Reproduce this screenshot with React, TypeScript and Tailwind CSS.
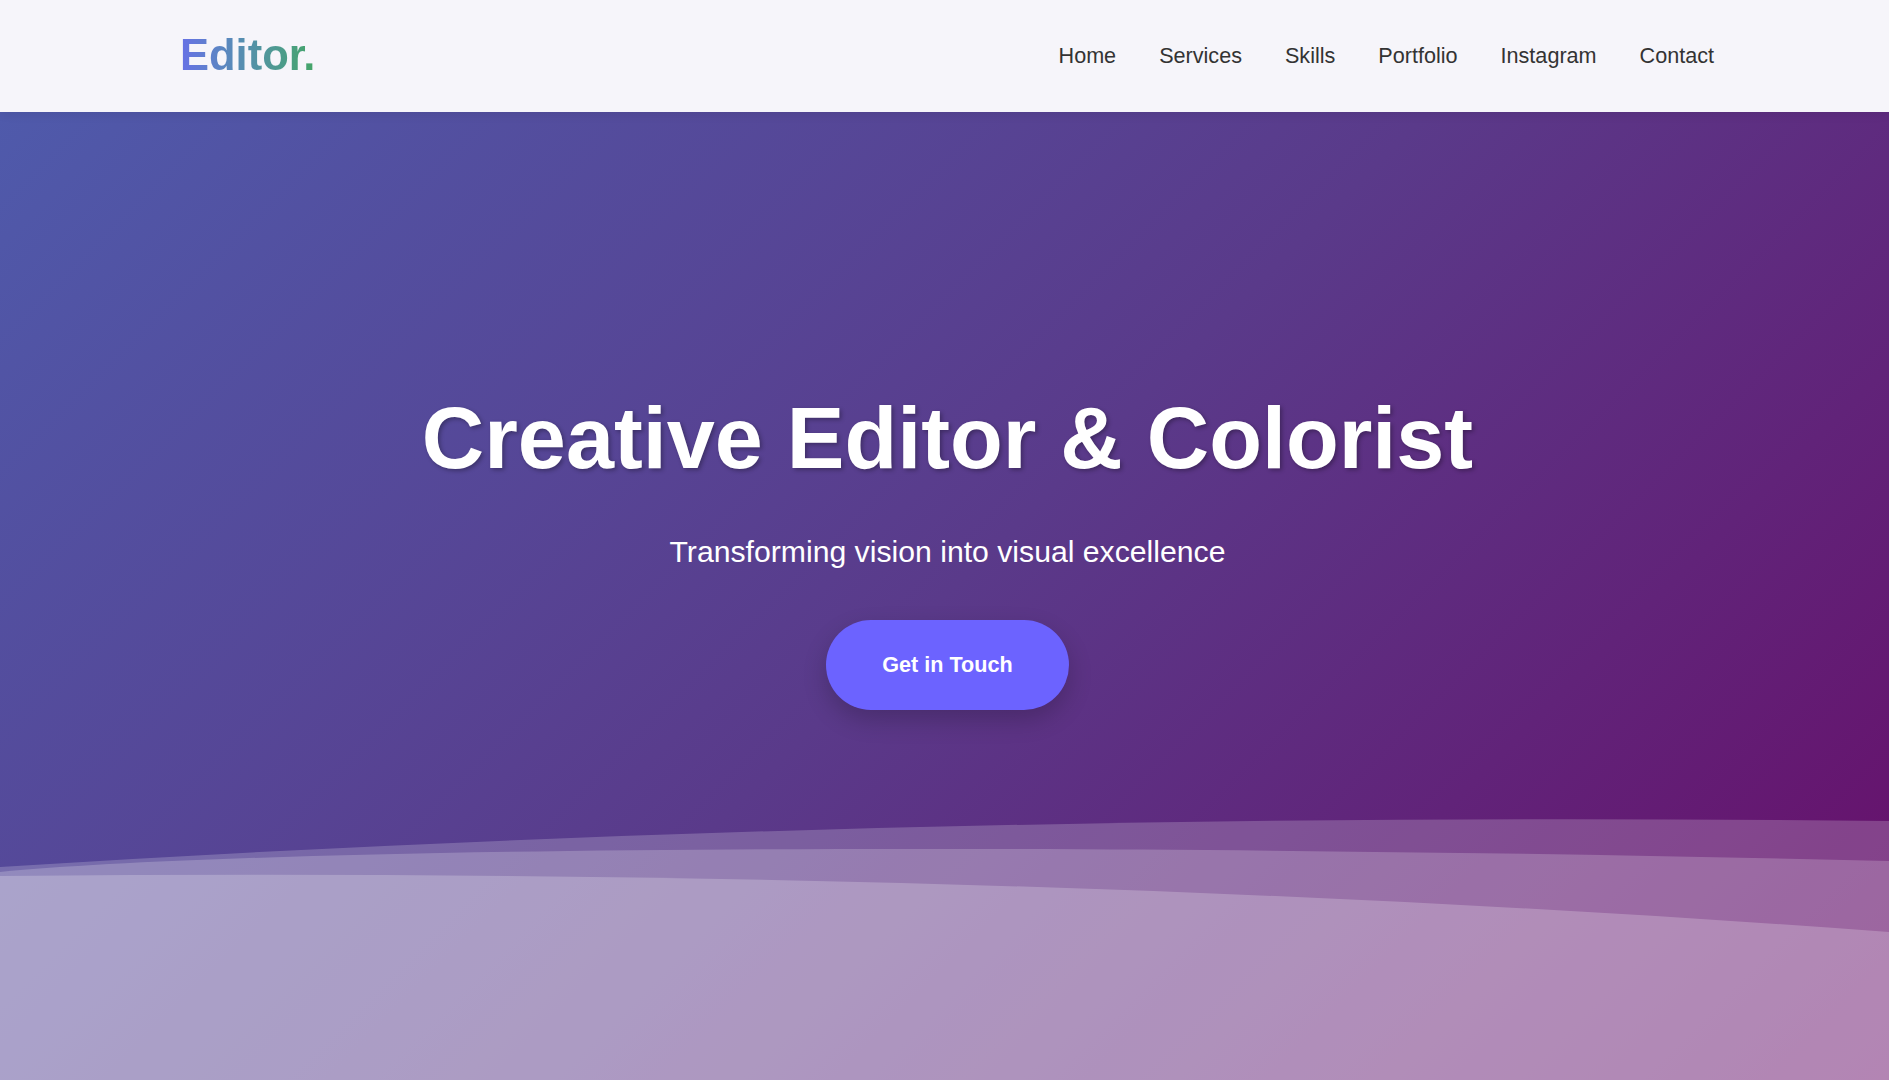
import React from "react";

const links = ["Home", "Services", "Skills", "Portfolio", "Instagram", "Contact"];

export default function App() {
  return (
    <div className="w-full min-h-screen font-['Liberation_Sans',Arial,sans-serif] overflow-hidden">
      <nav className="relative z-10 h-[112px] bg-[#f6f5fa] shadow-[0_2px_10px_rgba(0,0,0,0.08)] flex items-center justify-between pl-[180px] pr-[175px]">
        <div className="text-[43.5px] font-bold bg-gradient-to-r from-[#6770e6] to-[#45a566] bg-clip-text text-transparent leading-normal">
          Editor.
        </div>
        <ul className="flex items-center gap-[43px]">
          {links.map((l) => (
            <li key={l} className="text-[21.6px] text-[#333333] leading-normal">
              {l}
            </li>
          ))}
        </ul>
      </nav>
      <section className="relative h-[968px] bg-[linear-gradient(135deg,#4f5aab_0%,#5a3a8a_50%,#680c68_100%)] overflow-hidden">
        <div className="relative z-10 flex flex-col items-center pt-[275px] pl-[6px] text-white">
          <h1 className="text-[86.4px] font-bold leading-[1.2] [text-shadow:2px_2px_4px_rgba(0,0,0,0.3)]">
            Creative Editor &amp; Colorist
          </h1>
          <p className="mt-[38px] text-[30.2px] leading-[1.5]">
            Transforming vision into visual excellence
          </p>
          <button className="mt-[46px] h-[90px] w-[243px] rounded-full bg-[#6c63ff] text-white text-[21.6px] font-bold shadow-[0_10px_25px_rgba(0,0,0,0.2)] flex items-center justify-center">
            Get in Touch
          </button>
        </div>
        <svg
          className="absolute left-0 bottom-0 w-full h-[280px]"
          viewBox="0 0 1889 280"
          preserveAspectRatio="none"
        >
          <path d="M0,67 Q900,10 1889,21 L1889,280 L0,280 Z" fill="rgba(255,255,255,0.2)" />
          <path d="M0,72 C250,48 1000,40 1889,61 L1889,280 L0,280 Z" fill="rgba(255,255,255,0.2)" />
          <path d="M0,76 Q1000,66 1889,132 L1889,280 L0,280 Z" fill="rgba(255,255,255,0.22)" />
        </svg>
      </section>
    </div>
  );
}
